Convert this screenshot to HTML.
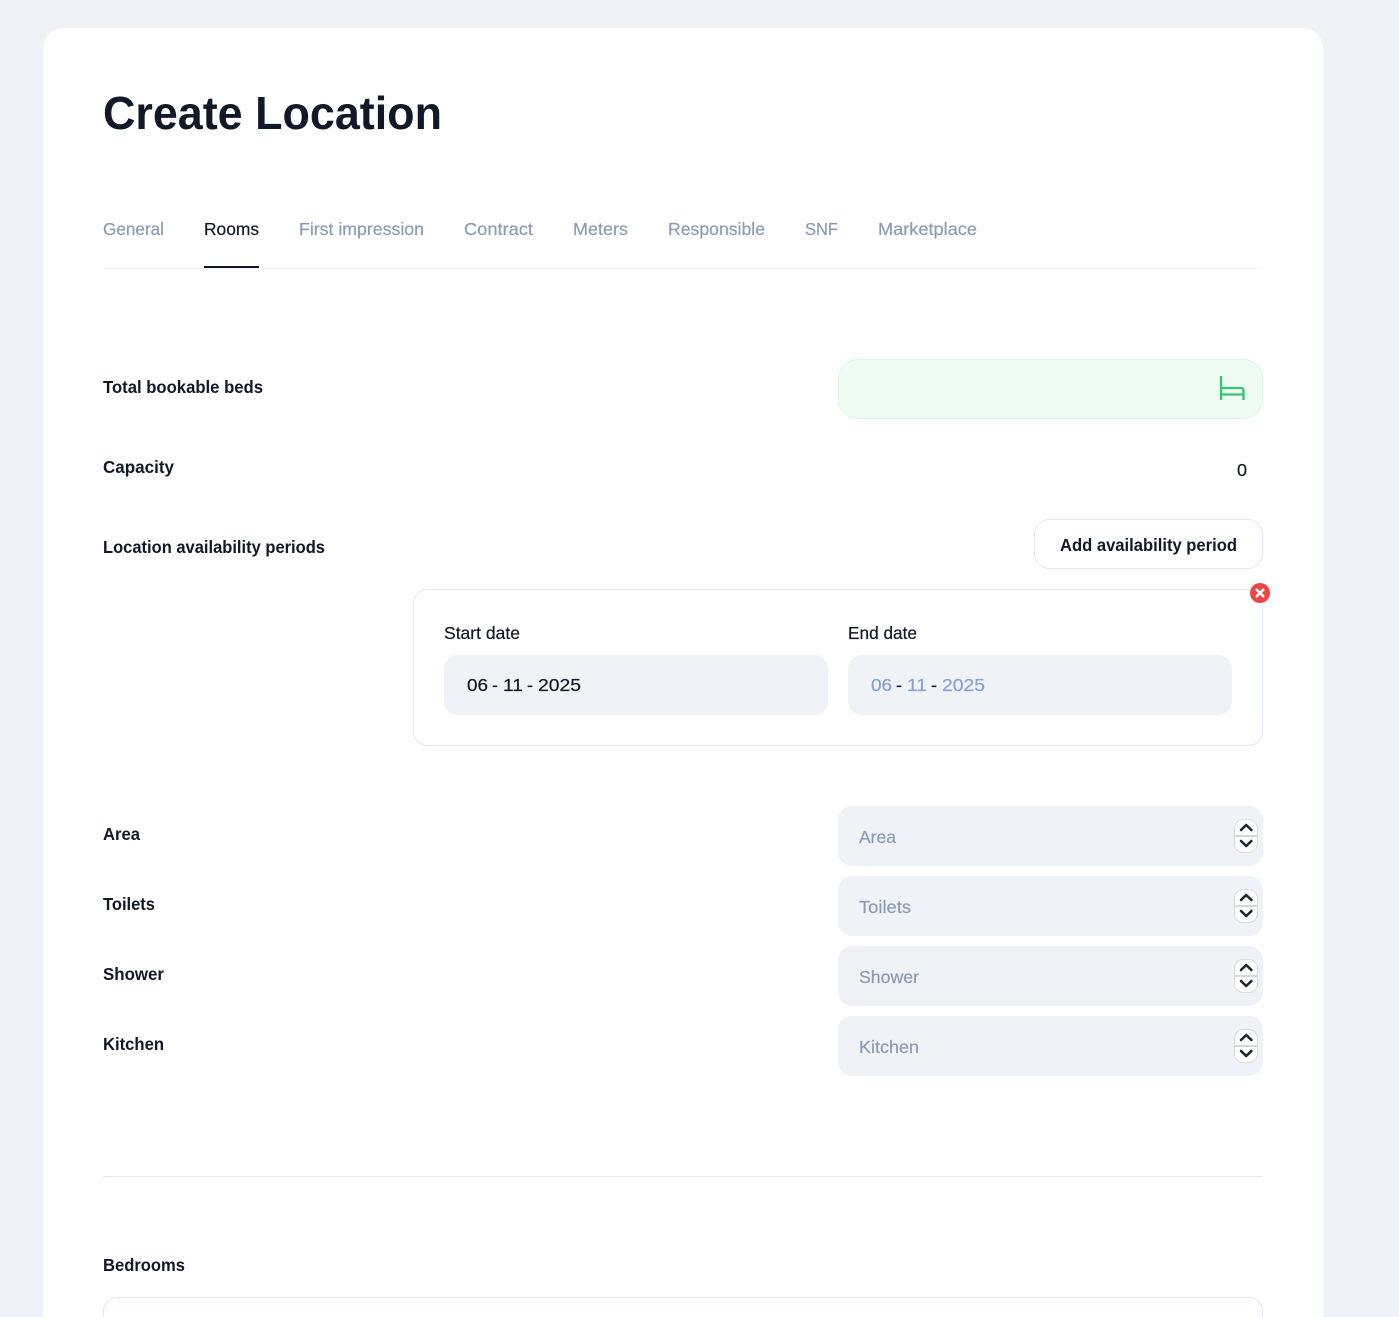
<!DOCTYPE html>
<html lang="en"><head><meta charset="utf-8"><title>Create Location</title>
<style>
html,body{margin:0;padding:0;background:#eff2f7;width:1399px;height:1317px;overflow:hidden}
svg{display:block;position:absolute;left:0;top:0}
text{font-family:"Liberation Sans",sans-serif;font-size:17.5px}
.l{font-weight:700;fill:#111827}
.t{fill:#8b9bb4;stroke:#8b9bb4;stroke-width:.2px}
.d{fill:#111827;stroke:#111827;stroke-width:.2px}
.b{fill:#86a0d8;stroke:#86a0d8;stroke-width:.2px}
</style></head><body>
<svg width="1399" height="1317" viewBox="0 0 1399 1317" xmlns="http://www.w3.org/2000/svg">
<rect x="43" y="28" width="1280" height="1320" rx="20" fill="#fff"/>
<text x="103" y="129" font-weight="700" style="font-size:46px" fill="#111827" textLength="339" lengthAdjust="spacingAndGlyphs">Create Location</text>

<rect x="103" y="268" width="1160" height="1" fill="#f1f3f7"/>
<rect x="204" y="266" width="55" height="2" fill="#111827"/>
<text class="t" x="103" y="235" textLength="61" lengthAdjust="spacingAndGlyphs">General</text>
<text class="d" x="204" y="235" textLength="55" lengthAdjust="spacingAndGlyphs">Rooms</text>
<text class="t" x="299" y="235" textLength="125" lengthAdjust="spacingAndGlyphs">First impression</text>
<text class="t" x="464" y="235" textLength="69" lengthAdjust="spacingAndGlyphs">Contract</text>
<text class="t" x="573" y="235" textLength="55" lengthAdjust="spacingAndGlyphs">Meters</text>
<text class="t" x="668" y="235" textLength="97" lengthAdjust="spacingAndGlyphs">Responsible</text>
<text class="t" x="805" y="235" textLength="33" lengthAdjust="spacingAndGlyphs">SNF</text>
<text class="t" x="878" y="235" textLength="99" lengthAdjust="spacingAndGlyphs">Marketplace</text>

<text class="l" x="103" y="393" textLength="160" lengthAdjust="spacingAndGlyphs">Total bookable beds</text>
<rect x="838.500" y="359.500" width="424" height="59" rx="19" fill="#eefcf3" stroke="#d9f8e4"/>
<path d="M1221 376V400M1221 388H1240.500Q1243.500 388 1243.500 391V400M1221 394.500H1243.500" fill="none" stroke="#34c76f" stroke-width="2.300"/>

<text class="l" x="103" y="473" textLength="71" lengthAdjust="spacingAndGlyphs">Capacity</text>
<text class="d" x="1237" y="476" textLength="10" lengthAdjust="spacingAndGlyphs">0</text>

<text class="l" x="103" y="553" textLength="222" lengthAdjust="spacingAndGlyphs">Location availability periods</text>
<rect x="1034.500" y="519.500" width="228" height="49" rx="15" fill="#fff" stroke="#e2e8f0"/>
<text class="l" x="1060" y="551" textLength="177" lengthAdjust="spacingAndGlyphs">Add availability period</text>

<rect x="413.500" y="589.500" width="849" height="156" rx="14" fill="#fff" stroke="#e2e8f0"/>
<circle cx="1260" cy="593" r="10" fill="#ef4444"/>
<path d="M1256.800 589.800L1263.200 596.200M1263.200 589.800L1256.800 596.200" stroke="#fff" stroke-width="2.600" stroke-linecap="round"/>
<text class="d" x="444" y="639" textLength="76" lengthAdjust="spacingAndGlyphs">Start date</text>
<text class="d" x="848" y="639" textLength="69" lengthAdjust="spacingAndGlyphs">End date</text>
<rect x="444" y="655" width="384" height="60" rx="14" fill="#eff2f7"/>
<rect x="848" y="655" width="384" height="60" rx="14" fill="#eff2f7"/>
<text class="d" x="467" y="691" textLength="21" lengthAdjust="spacingAndGlyphs">06</text>
<text class="d" x="492" y="691" textLength="6" lengthAdjust="spacingAndGlyphs">-</text>
<text class="d" x="503" y="691" textLength="20" lengthAdjust="spacingAndGlyphs">11</text>
<text class="d" x="527" y="691" textLength="6" lengthAdjust="spacingAndGlyphs">-</text>
<text class="d" x="538" y="691" textLength="43" lengthAdjust="spacingAndGlyphs">2025</text>
<text class="b" x="871" y="691" textLength="21" lengthAdjust="spacingAndGlyphs">06</text>
<text class="d" x="896" y="691" textLength="6" lengthAdjust="spacingAndGlyphs">-</text>
<text class="b" x="907" y="691" textLength="20" lengthAdjust="spacingAndGlyphs">11</text>
<text class="d" x="931" y="691" textLength="6" lengthAdjust="spacingAndGlyphs">-</text>
<text class="b" x="942" y="691" textLength="43" lengthAdjust="spacingAndGlyphs">2025</text>

<text class="l" x="103" y="840" textLength="37" lengthAdjust="spacingAndGlyphs">Area</text>
<text class="l" x="103" y="910" textLength="52" lengthAdjust="spacingAndGlyphs">Toilets</text>
<text class="l" x="103" y="980" textLength="61" lengthAdjust="spacingAndGlyphs">Shower</text>
<text class="l" x="103" y="1050" textLength="61" lengthAdjust="spacingAndGlyphs">Kitchen</text>

<defs>
<g id="spin">
<rect x="1234.500" y="0" width="23" height="33" rx="9" fill="#fff" stroke="#cfd2d8" stroke-width=".8"/>
<rect x="1234.500" y="15.500" width="23" height="2" fill="#d5d7da"/>
<path d="M1241 10.500L1246.200 5.500L1251.400 10.500M1241 21.500L1246.200 26.500L1251.400 21.500" fill="none" stroke="#1f2430" stroke-width="2.600" stroke-linecap="round" stroke-linejoin="round"/>
</g>
</defs>
<rect x="838" y="806" width="425" height="60" rx="14" fill="#eff2f7"/>
<rect x="838" y="876" width="425" height="60" rx="14" fill="#eff2f7"/>
<rect x="838" y="946" width="425" height="60" rx="14" fill="#eff2f7"/>
<rect x="838" y="1016" width="425" height="60" rx="14" fill="#eff2f7"/>
<use href="#spin" x="0" y="819.500"/>
<use href="#spin" x="0" y="889.500"/>
<use href="#spin" x="0" y="959.500"/>
<use href="#spin" x="0" y="1029.500"/>
<text class="t" x="859" y="843" textLength="37" lengthAdjust="spacingAndGlyphs">Area</text>
<text class="t" x="859" y="913" textLength="52" lengthAdjust="spacingAndGlyphs">Toilets</text>
<text class="t" x="859" y="983" textLength="60" lengthAdjust="spacingAndGlyphs">Shower</text>
<text class="t" x="859" y="1053" textLength="60" lengthAdjust="spacingAndGlyphs">Kitchen</text>

<rect x="103" y="1176" width="1160" height="1" fill="#e8e6f0"/>
<text class="l" x="103" y="1271" textLength="82" lengthAdjust="spacingAndGlyphs">Bedrooms</text>
<rect x="103.500" y="1297.500" width="1159" height="80" rx="14" fill="#fff" stroke="#e2e8f0"/>
</svg>
</body></html>
